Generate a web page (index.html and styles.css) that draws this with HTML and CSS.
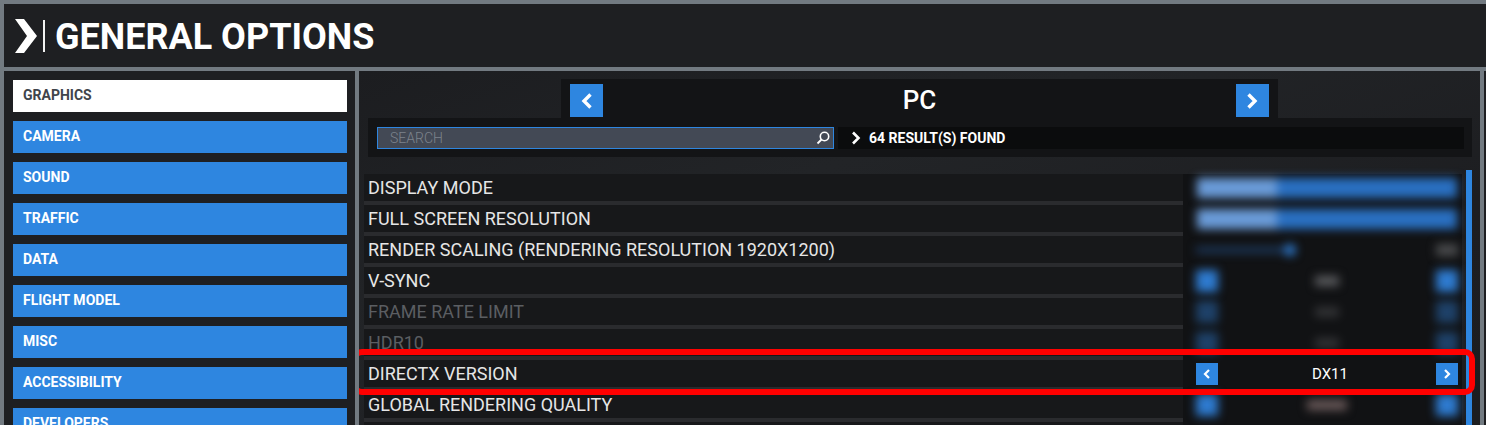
FILE: index.html
```html
<!DOCTYPE html>
<html lang="en">
<head>
<meta charset="utf-8">
<title>General Options</title>
<link rel="stylesheet" href="styles.css">
</head>
<body>
<div class="app">
  <header class="topbar">
    <svg class="logo" viewBox="0 0 22 34" width="22" height="34"><polygon points="0,0 9,0 22,17 9,34 0,34 12,17" fill="#fff"/></svg>
    <span class="divider"></span>
    <h1 class="title">GENERAL OPTIONS</h1>
  </header>
  <div class="main">
    <nav class="sidebar">
      <div class="tab active">GRAPHICS</div>
      <div class="tab">CAMERA</div>
      <div class="tab">SOUND</div>
      <div class="tab">TRAFFIC</div>
      <div class="tab">DATA</div>
      <div class="tab">FLIGHT MODEL</div>
      <div class="tab">MISC</div>
      <div class="tab">ACCESSIBILITY</div>
      <div class="tab">DEVELOPERS</div>
    </nav>
    <section class="content">
      <div class="platform-bar">
        <div class="nav-btn"><svg viewBox="0 0 12 16" width="12" height="16"><polyline points="9.5,1.5 3,8 9.5,14.5" fill="none" stroke="#fff" stroke-width="3.4"/></svg></div>
        <span class="platform">PC</span>
        <div class="nav-btn"><svg viewBox="0 0 12 16" width="12" height="16"><polyline points="2.5,1.5 9,8 2.5,14.5" fill="none" stroke="#fff" stroke-width="3.4"/></svg></div>
      </div>
      <div class="search-bar">
        <div class="search-input">
          <span class="placeholder">SEARCH</span>
          <svg class="search-icon" viewBox="0 0 14 14" width="14" height="14"><circle cx="8.5" cy="5.5" r="4.2" fill="none" stroke="#fff" stroke-width="1.6"/><line x1="5.5" y1="8.5" x2="1.5" y2="12.5" stroke="#fff" stroke-width="1.8"/></svg>
        </div>
        <div class="results">
          <svg viewBox="0 0 10 14" width="10" height="14"><polyline points="2,1.5 7.5,7 2,12.5" fill="none" stroke="#fff" stroke-width="2.6"/></svg>
          <span>64 RESULT(S) FOUND</span>
        </div>
      </div>
      <div class="settings">
        <div class="table">
          <div class="labels">
            <div class="label">DISPLAY MODE</div>
            <div class="label">FULL SCREEN RESOLUTION</div>
            <div class="label">RENDER SCALING (RENDERING RESOLUTION 1920X1200)</div>
            <div class="label">V-SYNC</div>
            <div class="label disabled">FRAME RATE LIMIT</div>
            <div class="label disabled">HDR10</div>
            <div class="label">DIRECTX VERSION</div>
            <div class="label">GLOBAL RENDERING QUALITY</div>
            <div class="label"></div>
          </div>
          <div class="values">
            <div class="value blur"><div class="dropdown"></div></div>
            <div class="value blur"><div class="dropdown"></div></div>
            <div class="value blur"><div class="slider"><div class="track"></div><div class="knob"></div></div><div class="numbox"></div></div>
            <div class="value blur"><div class="sq"></div><div class="blob"></div><div class="sq"></div></div>
            <div class="value blur dim"><div class="sq"></div><div class="blob"></div><div class="sq"></div></div>
            <div class="value blur dim"><div class="sq"></div><div class="blob"></div><div class="sq"></div></div>
            <div class="value sharp">
              <div class="arrow-btn"><svg viewBox="0 0 8 10" width="8" height="10"><polyline points="6,1 2,5 6,9" fill="none" stroke="#fff" stroke-width="2.2"/></svg></div>
              <span class="val-text">DX11</span>
              <div class="arrow-btn"><svg viewBox="0 0 8 10" width="8" height="10"><polyline points="2,1 6,5 2,9" fill="none" stroke="#fff" stroke-width="2.2"/></svg></div>
            </div>
            <div class="value blur"><div class="sq"></div><div class="blob warm"></div><div class="sq"></div></div>
            <div class="value blur"></div>
          </div>
        </div>
        <div class="scrollbar"></div>
        <div class="highlight"></div>
      </div>
    </section>
    <div class="stub"></div>
  </div>
</div>
</body>
</html>
```

FILE: styles.css
```css
* { box-sizing: border-box; }

body {
  margin: 0;
  width: 1486px;
  height: 425px;
  overflow: hidden;
  background: #727a81;
  font-family: Roboto, "Liberation Sans", sans-serif;
  color: #fff;
}

.app {
  padding: 4px 0 0 4px;
}

.topbar {
  height: 63px;
  background: #1e1f22;
  display: flex;
  align-items: center;
}

.logo {
  margin-left: 11px;
  flex-shrink: 0;
}

.divider {
  width: 2px;
  height: 32px;
  margin-left: 6px;
  background: #f2f2f2;
}

.title {
  margin: 0 0 0 10px;
  font-size: 36px;
  font-weight: 700;
  line-height: 1;
  color: #fff;
  padding-top: 3px;
}

.main {
  display: flex;
  gap: 4px;
  margin-top: 4px;
  height: 354px;
}

.sidebar {
  width: 351px;
  flex-shrink: 0;
  background: #1e1f22;
  padding: 9px 8px 0 9px;
  display: flex;
  flex-direction: column;
  gap: 9px;
  overflow: hidden;
}

.tab {
  flex-shrink: 0;
  height: 32px;
  line-height: 31px;
  padding-left: 10px;
  background: #2e86e0;
  color: #fff;
  font-size: 14px;
  font-weight: 700;
}

.tab.active {
  background: #fff;
  color: #40444b;
}

.content {
  width: 1121px;
  flex-shrink: 0;
  display: flex;
  flex-direction: column;
  background: linear-gradient(160deg, #1c1d20 0%, #222427 35%, #1d1e21 70%, #1c1d20 100%);
  overflow: hidden;
}

.platform-bar {
  margin: 8px 0 0 202px;
  width: 717px;
  height: 39px;
  background: #131416;
  padding: 5px 9px 0 9px;
  display: flex;
  justify-content: space-between;
  align-items: flex-start;
  flex-shrink: 0;
}

.nav-btn {
  width: 33px;
  height: 33px;
  background: #2e86e0;
  display: flex;
  align-items: center;
  justify-content: center;
}

.platform {
  font-size: 26px;
  font-weight: 500;
  line-height: 33px;
  color: #fff;
}

.search-bar {
  margin-left: 9px;
  width: 1104px;
  height: 39px;
  background: #131416;
  padding: 9px 8px 0 9px;
  display: flex;
  gap: 4px;
  flex-shrink: 0;
}

.search-input {
  width: 457px;
  height: 22px;
  border: 1px solid #2e86e0;
  background: #434955;
  display: flex;
  align-items: center;
  justify-content: space-between;
  padding: 0 3px 0 12px;
}

.placeholder {
  font-size: 14px;
  font-weight: 300;
  color: #7d838c;
}

.results {
  flex: 1;
  height: 22px;
  background: #0b0c0d;
  display: flex;
  align-items: center;
  gap: 8px;
  padding-left: 13px;
  font-size: 14px;
  font-weight: 700;
  color: #fff;
}

.settings {
  flex: 1;
  position: relative;
  display: flex;
  gap: 4px;
  padding: 0 8px 0 5px;
}

.table {
  display: flex;
  padding-top: 17px;
}

.labels {
  width: 819px;
  display: flex;
  flex-direction: column;
  gap: 4px;
  background: #2a2b2e;
}

.label {
  flex-shrink: 0;
  height: 27px;
  line-height: 28px;
  padding-left: 4px;
  background: #17181a;
  font-size: 18px;
  color: #e6e6e6;
}

.label.disabled {
  color: #5b5e62;
}

.values {
  width: 279px;
  display: flex;
  flex-direction: column;
  gap: 4px;
  background: #111214;
}

.value {
  flex-shrink: 0;
  height: 27px;
  display: flex;
  align-items: center;
  justify-content: space-between;
  padding: 0 4px 0 13px;
}

.blur {
  filter: blur(5px);
}

.dim {
  opacity: 0.45;
}

.dropdown {
  width: 260px;
  height: 20px;
  margin-left: 1px;
  background: linear-gradient(to right, #6a9bd8 0, #6a9bd8 80px, #2a70c2 80px, #2a70c2 100%);
}

.slider {
  position: relative;
  width: 100px;
  height: 14px;
  display: flex;
  align-items: center;
}

.track {
  width: 94px;
  height: 6px;
  background: #1d3a60;
}

.knob {
  width: 12px;
  height: 12px;
  border-radius: 50%;
  background: #2e7bd0;
  margin-left: -6px;
}

.numbox {
  width: 22px;
  height: 12px;
  background: #4a4b4d;
}

.sq {
  width: 22px;
  height: 22px;
  background: #2e7bd0;
}

.blob {
  width: 24px;
  height: 10px;
  background: #5a5b5e;
}

.blob.warm {
  width: 40px;
  background: #6b5a5a;
}

.arrow-btn {
  width: 22px;
  height: 22px;
  background: #2e86e0;
  display: flex;
  align-items: center;
  justify-content: center;
}

.val-text {
  font-size: 15px;
  font-weight: 400;
  color: #fff;
  margin-left: 6px;
}

.scrollbar {
  width: 6px;
  margin-top: 13px;
  background: #2e86e0;
  flex-shrink: 0;
}

.highlight {
  position: absolute;
  left: -7px;
  top: 192px;
  width: 1123px;
  height: 46px;
  border: 6px solid #ff0000;
  border-radius: 10px;
  pointer-events: none;
}

.stub {
  width: 2px;
  background: #1e1f22;
  flex-shrink: 0;
}
```
